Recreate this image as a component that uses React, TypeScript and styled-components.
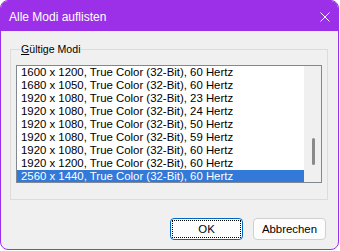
import styled, { createGlobalStyle } from 'styled-components';

const modes = [
    '1600 x 1200, True Color (32-Bit), 60 Hertz',
    '1680 x 1050, True Color (32-Bit), 60 Hertz',
    '1920 x 1080, True Color (32-Bit), 23 Hertz',
    '1920 x 1080, True Color (32-Bit), 24 Hertz',
    '1920 x 1080, True Color (32-Bit), 50 Hertz',
    '1920 x 1080, True Color (32-Bit), 59 Hertz',
    '1920 x 1080, True Color (32-Bit), 60 Hertz',
    '1920 x 1200, True Color (32-Bit), 60 Hertz',
    '2560 x 1440, True Color (32-Bit), 60 Hertz',
];

const selectedIndex = 8;

export default function App() {
    return (
        <>
            <GlobalStyle />
            <Window>
                <TitleBar>
                    <TitleText>Alle Modi auflisten</TitleText>
                    <CloseButton aria-label='Schließen'>
                        <svg width='10' height='10' viewBox='0 0 10 10'>
                            <path d='M0.5 0.5 L9.5 9.5 M9.5 0.5 L0.5 9.5' stroke='#fff' strokeWidth='1' fill='none' />
                        </svg>
                    </CloseButton>
                </TitleBar>
                <Body>
                    <GroupBox>
                        <GroupLabel>
                            <Mnemonic>G</Mnemonic>ültige Modi
                        </GroupLabel>
                        <ListBox>
                            <Rows>
                                {modes.map((mode, i) => (
                                    <Row key={i} $selected={i === selectedIndex}>
                                        {mode}
                                    </Row>
                                ))}
                            </Rows>
                            <ScrollTrack>
                                <ScrollThumb />
                            </ScrollTrack>
                        </ListBox>
                    </GroupBox>
                    <ButtonRow>
                        <DialogButton $default>OK</DialogButton>
                        <DialogButton>Abbrechen</DialogButton>
                    </ButtonRow>
                </Body>
            </Window>
        </>
    );
}

const GlobalStyle = createGlobalStyle`
    html, body {
        margin: 0;
        padding: 0;
        background: #ffffff;
    }
    body {
        font-family: 'Liberation Sans', Arial, sans-serif;
    }
`;

const Window = styled.div`
    box-sizing: border-box;
    width: 339px;
    height: 250px;
    display: flex;
    flex-direction: column;
    border: 1px solid #9b30e8;
    border-radius: 8px;
    overflow: hidden;
    background: #f0f0f0;
`;

const TitleBar = styled.div`
    flex: 0 0 30px;
    display: flex;
    align-items: center;
    justify-content: space-between;
    background: #9b30e8;
    padding: 0 8px 0 8px;
`;

const TitleText = styled.span`
    color: #ffffff;
    font-size: 12px;
    margin-top: 1px;
`;

const CloseButton = styled.div`
    width: 10px;
    height: 10px;
    display: flex;
    margin-top: 1px;
`;

const Body = styled.div`
    flex: 1;
    display: flex;
    flex-direction: column;
    padding: 11px 10px 9px 9px;
`;

const GroupBox = styled.fieldset`
    margin: 0;
    height: 158px;
    box-sizing: border-box;
    border: 1px solid #dcdcdc;
    padding: 9px 5px 15px 5px;
    min-width: 0;
`;

const GroupLabel = styled.legend`
    font-size: 10.6px;
    line-height: 14px;
    color: #000000;
    padding: 0 1px;
    margin-left: 4px;
`;

const Mnemonic = styled.span`
    text-decoration: underline;
`;

const ListBox = styled.div`
    height: 118px;
    box-sizing: border-box;
    border: 1px solid #828790;
    background: #ffffff;
    display: flex;
    overflow: hidden;
`;

const Rows = styled.div`
    flex: 1;
    display: flex;
    flex-direction: column;
    overflow: hidden;
`;

const Row = styled.div<{ $selected?: boolean }>`
    flex: 0 0 13px;
    line-height: 13px;
    font-size: 11.4px;
    padding-left: 4px;
    white-space: nowrap;
    color: ${(props) => (props.$selected ? '#ffffff' : '#000000')};
    background: ${(props) => (props.$selected ? '#3379d9' : 'transparent')};
`;

const ScrollTrack = styled.div`
    flex: 0 0 17px;
    background: #f0f0f0;
    padding-top: 72px;
    padding-left: 8px;
    box-sizing: border-box;
`;

const ScrollThumb = styled.div`
    width: 3px;
    height: 27px;
    border-radius: 2px;
    background: #8a8a8a;
`;

const ButtonRow = styled.div`
    margin-top: 18px;
    padding-right: 2px;
    display: flex;
    justify-content: flex-end;
    gap: 10px;
`;

const DialogButton = styled.button<{ $default?: boolean }>`
    position: relative;
    width: 73px;
    height: 22px;
    box-sizing: border-box;
    font-family: 'Liberation Sans', Arial, sans-serif;
    font-size: 11.4px;
    color: #000000;
    background: #fdfdfd;
    border: 1px solid ${(props) => (props.$default ? '#0067c0' : '#d0d0d0')};
    border-radius: 4px;
    padding: 0;

    &::after {
        content: '';
        display: ${(props) => (props.$default ? 'block' : 'none')};
        position: absolute;
        inset: 1px;
        border: 1px dotted #000000;
    }
`;
